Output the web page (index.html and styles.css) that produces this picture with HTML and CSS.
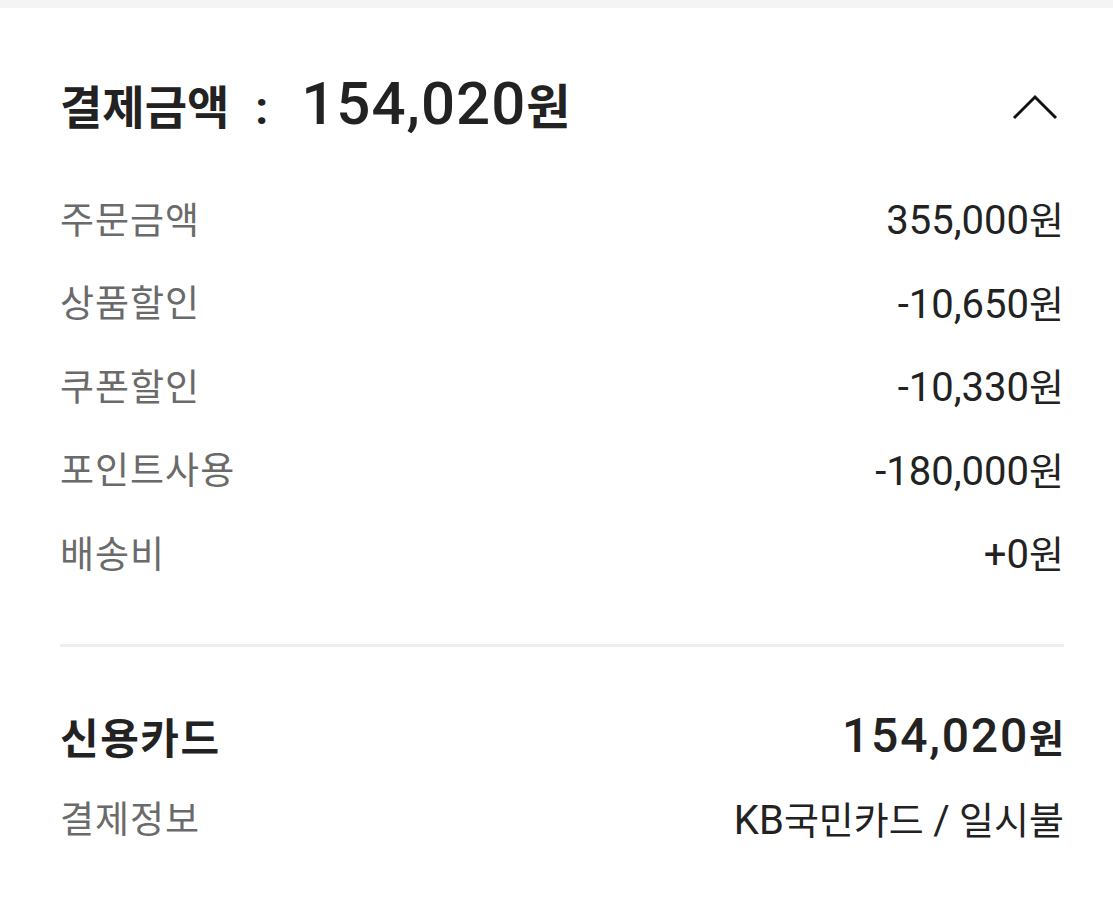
FILE: index.html
```html
<!DOCTYPE html>
<html lang="ko">
<head>
<meta charset="utf-8">
<link rel="stylesheet" href="styles.css">
</head>
<body>
<div class="strip"></div>
<section class="summary">
  <header class="summary-head">
    <h1 class="summary-title">결제금액<span class="colon">:</span><span class="big">154,020</span><span class="won">원</span></h1>
    <svg class="chevron" width="46" height="26" viewBox="0 0 46 26"><polyline points="2,24 23,3 44,24" fill="none" stroke="#111" stroke-width="3"/></svg>
  </header>
  <ul class="lines">
    <li class="line"><span class="label">주문금액</span><span class="value"><span class="n">355,000</span>원</span></li>
    <li class="line"><span class="label">상품할인</span><span class="value"><span class="n">-10,650</span>원</span></li>
    <li class="line"><span class="label">쿠폰할인</span><span class="value"><span class="n">-10,330</span>원</span></li>
    <li class="line"><span class="label">포인트사용</span><span class="value"><span class="n">-180,000</span>원</span></li>
    <li class="line"><span class="label">배송비</span><span class="value"><span class="n">+0</span>원</span></li>
  </ul>
  <hr class="divider">
  <div class="pay">
    <div class="pay-row"><span class="pay-method">신용카드</span><span class="pay-amount"><span class="n">154,020</span>원</span></div>
    <div class="line"><span class="label">결제정보</span><span class="value"><span class="n">KB</span>국민카드 <span class="n">/</span> 일시불</span></div>
  </div>
</section>
</body>
</html>
```

FILE: styles.css
```css
* { box-sizing: border-box; }
html, body { margin: 0; padding: 0; background: #fff; }
body { font-family: Roboto, "Noto Sans CJK KR", sans-serif; color: #222; }
.strip { height: 8px; background: #f4f4f4; }
.summary { padding: 0 49px 0 60px; }
.summary-head { display: flex; align-items: center; justify-content: space-between; padding-top: 68px; height: 128px; }
.summary-title { margin: 0; font-size: 46px; font-weight: 700; line-height: 60px; color: #222; white-space: nowrap; }
.summary-title .colon { margin: 0 33px 0 26px; }
.summary-title .big { font-size: 60px; font-weight: 500; letter-spacing: 1px; }
.summary-title .won { font-size: 48px; }
.chevron { display: block; margin-right: 6px; margin-top: 2px; }
.lines { list-style: none; margin: 40px 0 0; padding: 0; }
.line { display: flex; justify-content: space-between; align-items: center; height: 83.5px; }
.label { color: #6a6a6a; font-size: 37px; letter-spacing: 1px; }
.value { color: #222; font-size: 38px; white-space: nowrap; }
.value .n { font-size: 40px; }
.divider { border: 0; height: 3px; background: #eeeeee; margin: 50px 0 0; }
.pay { padding-top: 49px; }
.pay-row { display: flex; justify-content: space-between; align-items: center; height: 80px; font-weight: 700; }
.pay-method { font-size: 42px; letter-spacing: 1.5px; }
.pay-amount { font-size: 38px; }
.pay-amount .n { font-size: 48px; font-weight: 500; letter-spacing: 1.8px; }
```
